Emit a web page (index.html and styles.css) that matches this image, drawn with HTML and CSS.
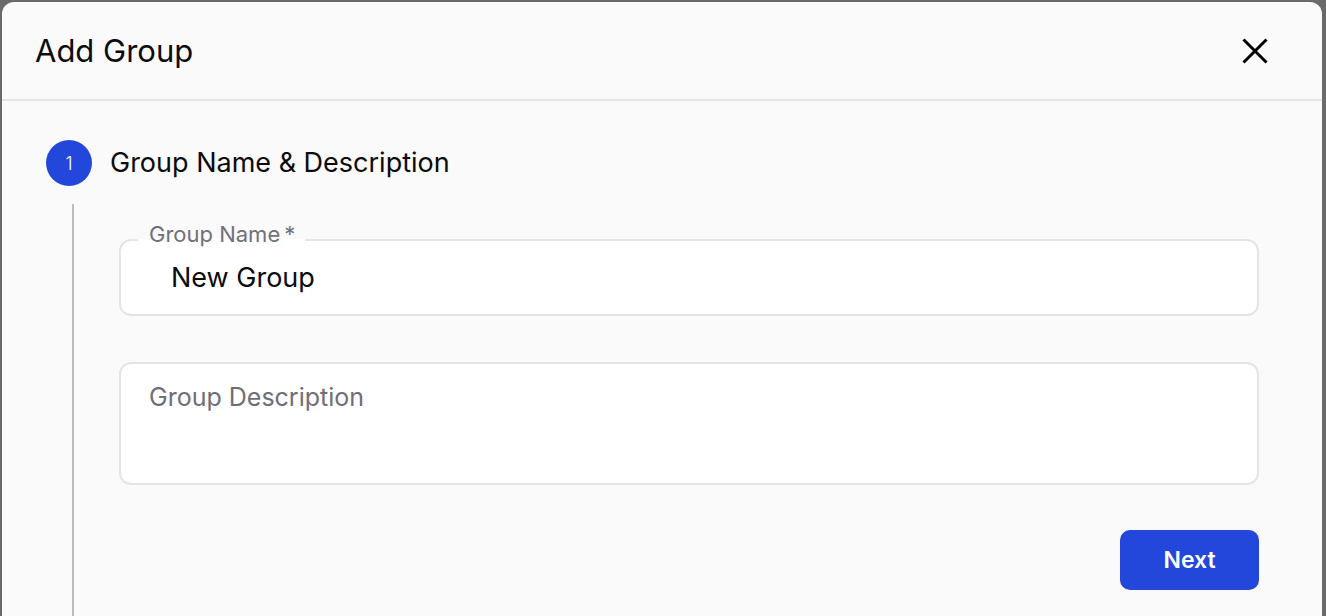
FILE: index.html
```html
<!DOCTYPE html>
<html lang="en">
<head>
<meta charset="utf-8">
<title>Add Group</title>
<link rel="stylesheet" href="styles.css">
</head>
<body>
<div class="dialog">
  <header class="header">
    <h1 class="title">Add Group</h1>
    <button class="close" aria-label="Close">
      <svg width="26" height="26" viewBox="0 0 26 26"><path d="M1.5 1.5 L24.5 24.5 M24.5 1.5 L1.5 24.5" stroke="#000" stroke-width="3" fill="none"/></svg>
    </button>
  </header>
  <div class="body">
    <div class="step-head">
      <div class="step-num">1</div>
      <div class="step-title">Group Name &amp; Description</div>
    </div>
    <div class="step-body">
      <div class="step-line"></div>
      <div class="step-content">
        <fieldset class="field">
          <legend class="field-label">Group Name&thinsp;*</legend>
          <div class="field-value">New Group</div>
        </fieldset>
        <div class="area"><div class="placeholder">Group Description</div></div>
        <button class="next">Next</button>
      </div>
    </div>
  </div>
</div>
</body>
</html>
```
FILE: styles.css
```css
* { box-sizing: border-box; }
html, body { margin: 0; height: 100%; }
body {
  background: #6a6a6a;
  padding: 2px 4px 0 2px;
  font-family: Inter, "Noto Sans", sans-serif;
  color: #0b0b0b;
  overflow: hidden;
}
.dialog {
  width: 1320px;
  height: 614px;
  background: #fafafa;
  border-radius: 12px 12px 0 0;
  display: flex;
  flex-direction: column;
}
.header {
  height: 99px;
  flex: none;
  display: flex;
  align-items: center;
  justify-content: space-between;
  padding: 0 54px 0 33px;
  border-bottom: 2px solid #e5e5e5;
}
.title {
  margin: 0;
  font-size: 31px;
  font-weight: 400;
  line-height: 36px;
}
.close {
  border: 0;
  background: none;
  padding: 0;
  width: 26px;
  height: 26px;
  display: block;
}
.close svg { display: block; }
.body {
  flex: 1;
  display: flex;
  flex-direction: column;
  padding: 39px 0 0 44px;
}
.step-head {
  display: flex;
  align-items: center;
  gap: 18px;
}
.step-num {
  width: 46px;
  height: 46px;
  border-radius: 50%;
  background: #2347db;
  color: #fff;
  font-size: 18px;
  font-weight: 300;
  display: flex;
  align-items: center;
  justify-content: center;
}
.step-title {
  font-size: 27px;
  line-height: 32px;
}
.step-body {
  flex: 1;
  display: flex;
  padding-top: 18px;
}
.step-line {
  width: 2px;
  margin-left: 26px;
  background: #bcbcbc;
}
.step-content {
  width: 1140px;
  margin-left: 45px;
  display: flex;
  flex-direction: column;
}
.field {
  margin: 18px 0 0;
  padding: 0 0 0 17px;
  border: 2px solid #e4e4e4;
  border-radius: 12px;
  background: #fff;
  min-width: 0;
}
.field-label {
  padding: 0 10px 11px 11px;
  font-size: 22px;
  line-height: 24px;
  color: #70707b;
}
.field-value {
  padding: 6px 0 21px 33px;
  font-size: 27px;
  line-height: 30px;
}
.area {
  margin-top: 46px;
  height: 123px;
  border: 2px solid #e4e4e4;
  border-radius: 12px;
  background: #fff;
  padding: 19px 0 0 28px;
}
.placeholder {
  font-size: 25px;
  line-height: 29px;
  color: #6e6e79;
}
.next {
  align-self: flex-end;
  margin-top: 45px;
  width: 139px;
  height: 60px;
  border: 0;
  border-radius: 10px;
  background: #2347db;
  color: #fff;
  font-family: Inter, "Noto Sans", sans-serif;
  font-size: 23px;
  font-weight: 600;
}
```
